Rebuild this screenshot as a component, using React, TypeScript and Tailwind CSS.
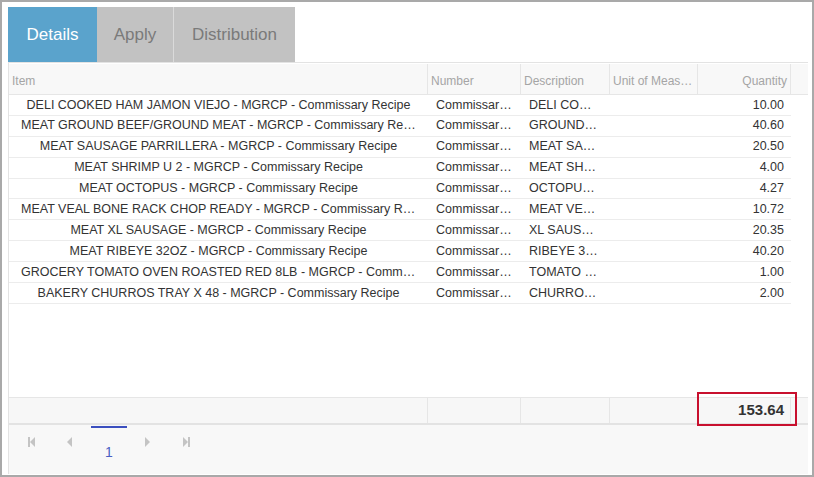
import React from 'react';

const rows = [
  ['DELI COOKED HAM JAMON VIEJO - MGRCP - Commissary Recipe', 'DELI COOKED HAM JAMON VIEJO', '10.00'],
  ['MEAT GROUND BEEF/GROUND MEAT - MGRCP - Commissary Recipe', 'GROUND BEEF', '40.60'],
  ['MEAT SAUSAGE PARRILLERA - MGRCP - Commissary Recipe', 'MEAT SAUSAGE PARRILLERA', '20.50'],
  ['MEAT SHRIMP U 2 - MGRCP - Commissary Recipe', 'MEAT SHRIMP U 2', '4.00'],
  ['MEAT OCTOPUS - MGRCP - Commissary Recipe', 'OCTOPUS FROZEN', '4.27'],
  ['MEAT VEAL BONE RACK CHOP READY - MGRCP - Commissary Recipe', 'MEAT VEAL BONE RACK CHOP', '10.72'],
  ['MEAT XL SAUSAGE - MGRCP - Commissary Recipe', 'XL SAUSAGE', '20.35'],
  ['MEAT RIBEYE 32OZ - MGRCP - Commissary Recipe', 'RIBEYE 32OZ', '40.20'],
  ['GROCERY TOMATO OVEN ROASTED RED 8LB - MGRCP - Commissary Recipe', 'TOMATO OVEN ROASTED', '1.00'],
  ['BAKERY CHURROS TRAY X 48 - MGRCP - Commissary Recipe', 'CHURROS TRAY X 48', '2.00'],
];

const PagerIcon = ({ dir, bar }: { dir: 'l' | 'r'; bar?: boolean }) => (
  <svg width="12" height="12" viewBox="0 0 12 12" fill="#c4c4c4">
    {dir === 'l' ? (
      <>
        {bar && <rect x="2" y="1" width="2" height="10" />}
        <polygon points="9,1 9,11 4,6" />
      </>
    ) : (
      <>
        <polygon points="3,1 3,11 8,6" />
        {bar && <rect x="8" y="1" width="2" height="10" />}
      </>
    )}
  </svg>
);

const App: React.FunctionComponent = () => {
  return (
    <div
      className="w-[814px] h-[477px] bg-white border-2 border-[#a9a9a9] pl-[6px] pr-[4px] pt-[4px] pb-[1px] flex flex-col text-[#333]"
      style={{ fontFamily: '"Liberation Sans", Arial, sans-serif' }}
    >
      {/* tabs */}
      <div className="flex h-[57px] border-b border-[#e3e3e3] shrink-0">
        <div className="w-[89px] h-[55px] mt-[1px] bg-[#5aa3cc] text-white text-[17px] flex items-center justify-center">
          Details
        </div>
        <div className="w-[77px] h-[55px] mt-[1px] bg-[#c2c2c2] text-[#7a7a7a] text-[17px] flex items-center justify-center border-r border-[#dadada]">
          Apply
        </div>
        <div className="w-[121px] h-[55px] mt-[1px] bg-[#c2c2c2] text-[#7a7a7a] text-[17px] flex items-center justify-center">
          Distribution
        </div>
      </div>

      {/* grid */}
      <div className="w-[800px] flex-1 flex flex-col border-l border-[#e3e3e3] text-[12.5px] relative">
        <div className="flex h-[31px] mt-[1px] bg-[#f8f8f8] border-b border-[#e6e6e6] text-[#a5a5a5] text-[12px] shrink-0">
          <div className="w-[419px] px-[3px] flex items-center pt-[4px] border-r border-[#e6e6e6]">Item</div>
          <div className="w-[93px] px-[3px] flex items-center pt-[4px] border-r border-[#e6e6e6]">Number</div>
          <div className="w-[89px] px-[3px] flex items-center pt-[4px] border-r border-[#e6e6e6]">Description</div>
          <div className="w-[88px] px-[3px] flex items-center pt-[4px] border-r border-[#e6e6e6] min-w-0">
            <span className="truncate">Unit of Measure</span>
          </div>
          <div className="w-[93px] px-[3px] flex items-center justify-end pt-[4px] border-r border-[#e6e6e6]">Quantity</div>
          <div className="flex-1" />
        </div>

        <div className="flex-1 bg-white">
          {rows.map((r, i) => (
            <div key={i} className="flex h-[20.9px] items-center border-b border-[#ececec] w-[782px]">
              <div className="w-[419px] shrink-0 px-[12px] truncate text-center">{r[0]}</div>
              <div className="w-[93px] shrink-0 pl-[8px] pr-[9px] truncate">Commissary Recipe</div>
              <div className="w-[89px] shrink-0 pl-[8px] pr-[10px] truncate">{r[1]}</div>
              <div className="w-[88px] shrink-0" />
              <div className="w-[93px] shrink-0 pr-[7px] text-right">{r[2]}</div>
            </div>
          ))}
        </div>

        <div className="flex h-[28px] bg-[#f7f7f7] border-t border-[#e6e6e6] border-b-2 border-b-[#e3e3e3] shrink-0">
          <div className="w-[419px] border-r border-[#e6e6e6]" />
          <div className="w-[93px] border-r border-[#e6e6e6]" />
          <div className="w-[89px] border-r border-[#e6e6e6]" />
          <div className="w-[88px] border-r border-[#e6e6e6]" />
          <div className="w-[93px] pr-[6px] flex items-center justify-end text-[15px] font-bold text-[#333] border-r border-[#e6e6e6]">
            153.64
          </div>
          <div className="flex-1" />
        </div>
        <div className="absolute left-[688px] bottom-[48px] w-[100px] h-[34px] border-2 border-[#c8102e]" />

        <div className="h-[49px] bg-[#f8f8f8] flex items-start shrink-0 text-[14px]">
          <div className="w-[30px] flex justify-end mt-[11px] pr-[1px]">
            <PagerIcon dir="l" bar />
          </div>
          <div className="w-[37px] flex justify-end mt-[11px] pr-[1px]">
            <PagerIcon dir="l" />
          </div>
          <div className="ml-[15px] w-[36px] flex flex-col items-center">
            <div className="w-[36px] h-[2px] bg-[#3b4fbf] mt-[1px]" />
            <div className="text-[#4a5fc4] mt-[17px] leading-none">1</div>
          </div>
          <div className="ml-[15px] mt-[11px]">
            <PagerIcon dir="r" />
          </div>
          <div className="ml-[26px] mt-[11px]">
            <PagerIcon dir="r" bar />
          </div>
        </div>
      </div>
    </div>
  );
};

export default App;
